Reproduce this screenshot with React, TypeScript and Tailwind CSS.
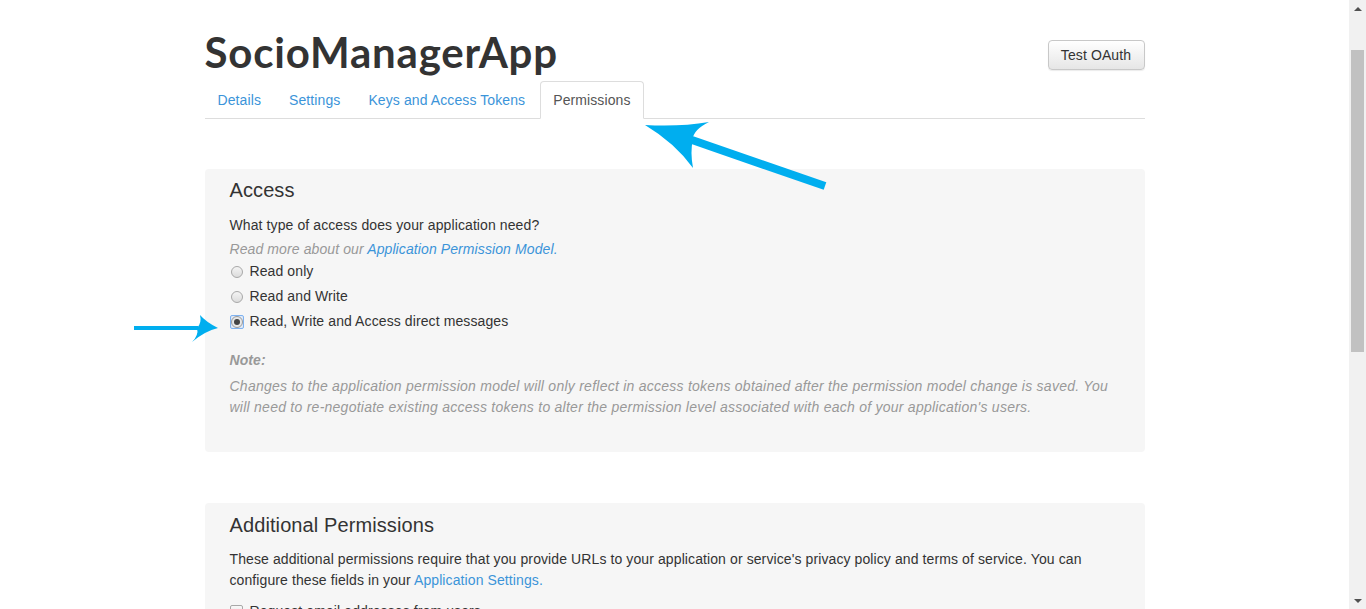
const tabs = ['Details', 'Settings', 'Keys and Access Tokens', 'Permissions'];

const options = [
  { label: 'Read only', checked: false },
  { label: 'Read and Write', checked: false },
  { label: 'Read, Write and Access direct messages', checked: true },
];

function Radio({ checked }: { checked: boolean }) {
  if (checked) {
    return (
      <span className="flex h-[14px] w-[14px] items-center justify-center rounded-[2px] border border-[#7fb2f0] bg-[#dfe9f7]">
        <span className="flex h-[12px] w-[12px] items-center justify-center rounded-full border border-[#9a9a9a] bg-[#e8e8e8]">
          <span className="h-[6px] w-[6px] rounded-full bg-[#444]" />
        </span>
      </span>
    );
  }
  return (
    <span className="flex h-[14px] w-[14px] items-center justify-center">
      <span className="h-[12px] w-[12px] rounded-full border border-[#a8a8a8] bg-gradient-to-b from-[#f4f4f4] to-[#dcdcdc]" />
    </span>
  );
}

function Arrows() {
  return (
    <svg className="pointer-events-none absolute left-0 top-0" width="1349" height="609">
      <line x1="692" y1="140" x2="825" y2="186" stroke="#00aeef" strokeWidth="8" />
      <path d="M645,125 Q680,127 709,122 Q693,130 693,139 Q690,152 693,168 Q675,143 645,125 Z" fill="#00aeef" />
      <line x1="134" y1="328" x2="198" y2="328" stroke="#00aeef" strokeWidth="4" />
      <path d="M218,328 Q206,322 200,315 Q202,323 197,328 Q199,335 192,342 Q205,331 218,328 Z" fill="#00aeef" />
    </svg>
  );
}

export default function App() {
  return (
    <div className="flex h-[609px] w-[1366px] overflow-hidden bg-white font-['Liberation_Sans',Arial,sans-serif] text-[14px] tracking-[0.1px] text-[#333]">
      <div className="relative flex-1 overflow-hidden">
        <div className="mx-auto w-[940px]">
          <div className="flex items-start justify-between pt-[28px]">
            <h1 className="font-['Lato',sans-serif] text-[42px] font-bold leading-[48px] tracking-[0.8px] text-[#333]">
              SocioManagerApp
            </h1>
            <button className="mt-[12px] h-[30px] w-[97px] rounded-[4px] border border-[#c8c8c8] bg-gradient-to-b from-white to-[#e6e6e6] text-[14px] text-[#333] shadow-[0_1px_1px_rgba(0,0,0,0.08)]">
              Test OAuth
            </button>
          </div>

          <ul className="mt-[5px] flex border-b border-[#ddd]">
            {tabs.map((t) => {
              const active = t === 'Permissions';
              return (
                <li key={t} className="mr-[2px] -mb-px">
                  <span
                    className={
                      active
                        ? 'flex h-[38px] items-center rounded-t-[4px] border border-[#ddd] border-b-white bg-white px-[12px] text-[#555]'
                        : 'flex h-[38px] items-center border border-transparent px-[12px] text-[#3b94d9]'
                    }
                  >
                    {t}
                  </span>
                </li>
              );
            })}
          </ul>

          <div className="mt-[50px] rounded-[4px] bg-[#f6f6f6] px-[25px] pb-[34px] pt-[9px]">
            <h2 className="text-[20px] leading-[24px]">Access</h2>
            <p className="mt-[13px] leading-[20px]">What type of access does your application need?</p>
            <p className="mt-[4px] italic leading-[20px] text-[#999]">
              Read more about our <span className="text-[#3b94d9]">Application Permission Model.</span>
            </p>
            <div>
              {options.map((o) => (
                <div key={o.label} className="flex h-[25px] items-center gap-[6px]">
                  <Radio checked={o.checked} />
                  <span>{o.label}</span>
                </div>
              ))}
            </div>
            <p className="mt-[16px] font-bold italic leading-[20px] text-[#999]">Note:</p>
            <p className="mt-[6px] italic leading-[21px] tracking-[0.25px] text-[#999]">
              Changes to the application permission model will only reflect in access tokens obtained after the permission model change is saved. You will need to re-negotiate existing access tokens to alter the permission level associated with each of your application's users.
            </p>
          </div>

          <div className="mt-[51px] rounded-[4px] bg-[#f6f6f6] px-[25px] pb-[30px] pt-[10px]">
            <h2 className="text-[20px] leading-[24px]">Additional Permissions</h2>
            <p className="mt-[12px] leading-[21px]">
              These additional permissions require that you provide URLs to your application or service's privacy policy and terms of service. You can configure these fields in your <span className="text-[#3b94d9]">Application Settings.</span>
            </p>
            <div className="mt-[10px] flex h-[20px] items-center gap-[7px]">
              <span className="h-[13px] w-[13px] rounded-[2px] border border-[#a8a8a8] bg-gradient-to-b from-[#f8f8f8] to-[#e0e0e0]" />
              <span>Request email addresses from users</span>
            </div>
          </div>
        </div>
        <Arrows />
      </div>

      <div className="flex w-[17px] flex-col items-center bg-[#f1f1f1]">
        <div className="flex h-[17px] items-center justify-center">
          <span className="h-0 w-0 border-x-[4px] border-b-[4px] border-x-transparent border-b-[#505050]" />
        </div>
        <div className="mt-[33px] h-[302px] w-[13px] bg-[#c1c1c1]" />
        <div className="flex-1" />
        <div className="flex h-[17px] items-center justify-center">
          <span className="h-0 w-0 border-x-[4px] border-t-[4px] border-x-transparent border-t-[#505050]" />
        </div>
      </div>
    </div>
  );
}
